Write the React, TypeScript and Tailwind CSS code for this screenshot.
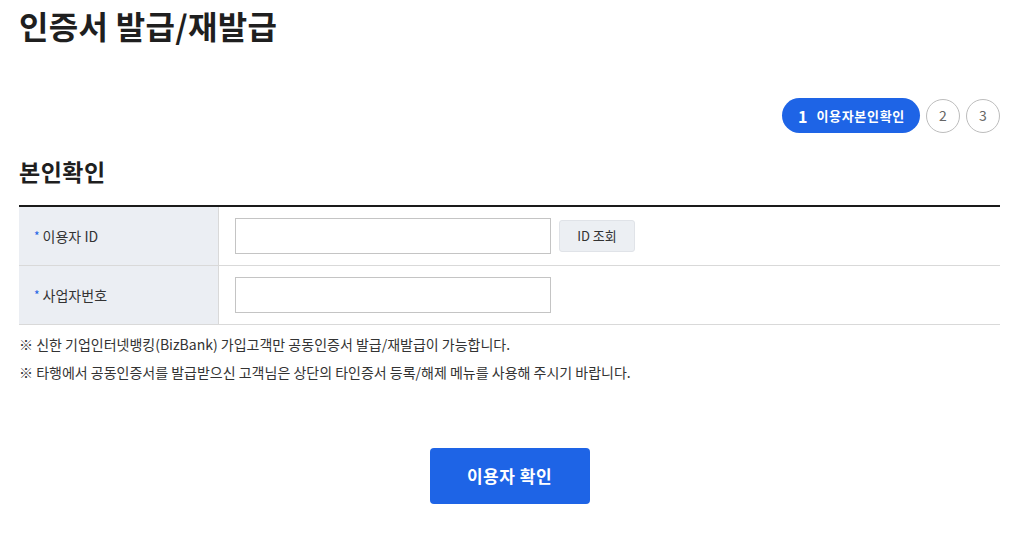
export default function App() {
  return (
    <div
      className="min-h-screen bg-white px-[19px] text-[#222]"
      style={{ fontFamily: '"Noto Sans CJK KR", "Noto Sans", sans-serif' }}
    >
      <h1 className="pt-[2px] text-[32px] font-bold leading-[46px] tracking-[0.3px] text-[#1f1f1f]">
        인증서 발급/재발급
      </h1>

      <div className="mt-[50px] flex items-center justify-end gap-[6px]">
        <div className="flex h-[35px] items-center gap-[9px] rounded-full bg-[#1e64e6] pl-[16px] pr-[15px] text-white">
          <span className="text-[16px] font-bold">1</span>
          <span className="text-[13px] font-bold tracking-[0.7px]">이용자본인확인</span>
        </div>
        <div className="flex h-[34px] w-[34px] items-center justify-center rounded-full border border-[#bdbdbd] text-[14px] text-[#666]">
          2
        </div>
        <div className="flex h-[34px] w-[34px] items-center justify-center rounded-full border border-[#bdbdbd] text-[14px] text-[#666]">
          3
        </div>
      </div>

      <h2 className="mt-[22px] text-[23px] font-bold leading-[32px] tracking-[0.5px] text-[#1f1f1f]">본인확인</h2>

      <div className="mt-[18px] border-t-2 border-[#1a1a1a]">
        <div className="flex h-[59px] border-b border-[#d9d9d9]">
          <div className="flex w-[200px] items-center border-r border-[#d9d9d9] bg-[#ebeef3] pl-[15px] text-[14px] text-[#333]">
            <span className="mr-[3px] text-[12px] text-[#1e64e6]">*</span>이용자 ID
          </div>
          <div className="flex items-center gap-[8px] pl-[16px]">
            <input className="h-[36px] w-[316px] border border-[#c4c4c4] bg-white outline-none" />
            <button className="h-[32px] w-[76px] rounded-[3px] border border-[#e0e3e8] bg-[#eceff3] text-[13px] text-[#333]">
              ID 조회
            </button>
          </div>
        </div>
        <div className="flex h-[59px] border-b border-[#d9d9d9]">
          <div className="flex w-[200px] items-center border-r border-[#d9d9d9] bg-[#ebeef3] pl-[15px] text-[14px] text-[#333]">
            <span className="mr-[3px] text-[12px] text-[#1e64e6]">*</span>사업자번호
          </div>
          <div className="flex items-center pl-[16px]">
            <input className="h-[36px] w-[316px] border border-[#c4c4c4] bg-white outline-none" />
          </div>
        </div>
      </div>

      <div className="mt-[9px] space-y-[8px] text-[14px] leading-[20px] text-[#333]">
        <p>※ 신한 기업인터넷뱅킹(BizBank) 가입고객만 공동인증서 발급/재발급이 가능합니다.</p>
        <p>※ 타행에서 공동인증서를 발급받으신 고객님은 상단의 타인증서 등록/해제 메뉴를 사용해 주시기 바랍니다.</p>
      </div>

      <div className="mt-[66px] flex justify-center">
        <button className="h-[56px] w-[160px] rounded-[4px] bg-[#1e64e6] text-[17px] font-bold tracking-[0.5px] text-white">
          이용자 확인
        </button>
      </div>
    </div>
  );
}
